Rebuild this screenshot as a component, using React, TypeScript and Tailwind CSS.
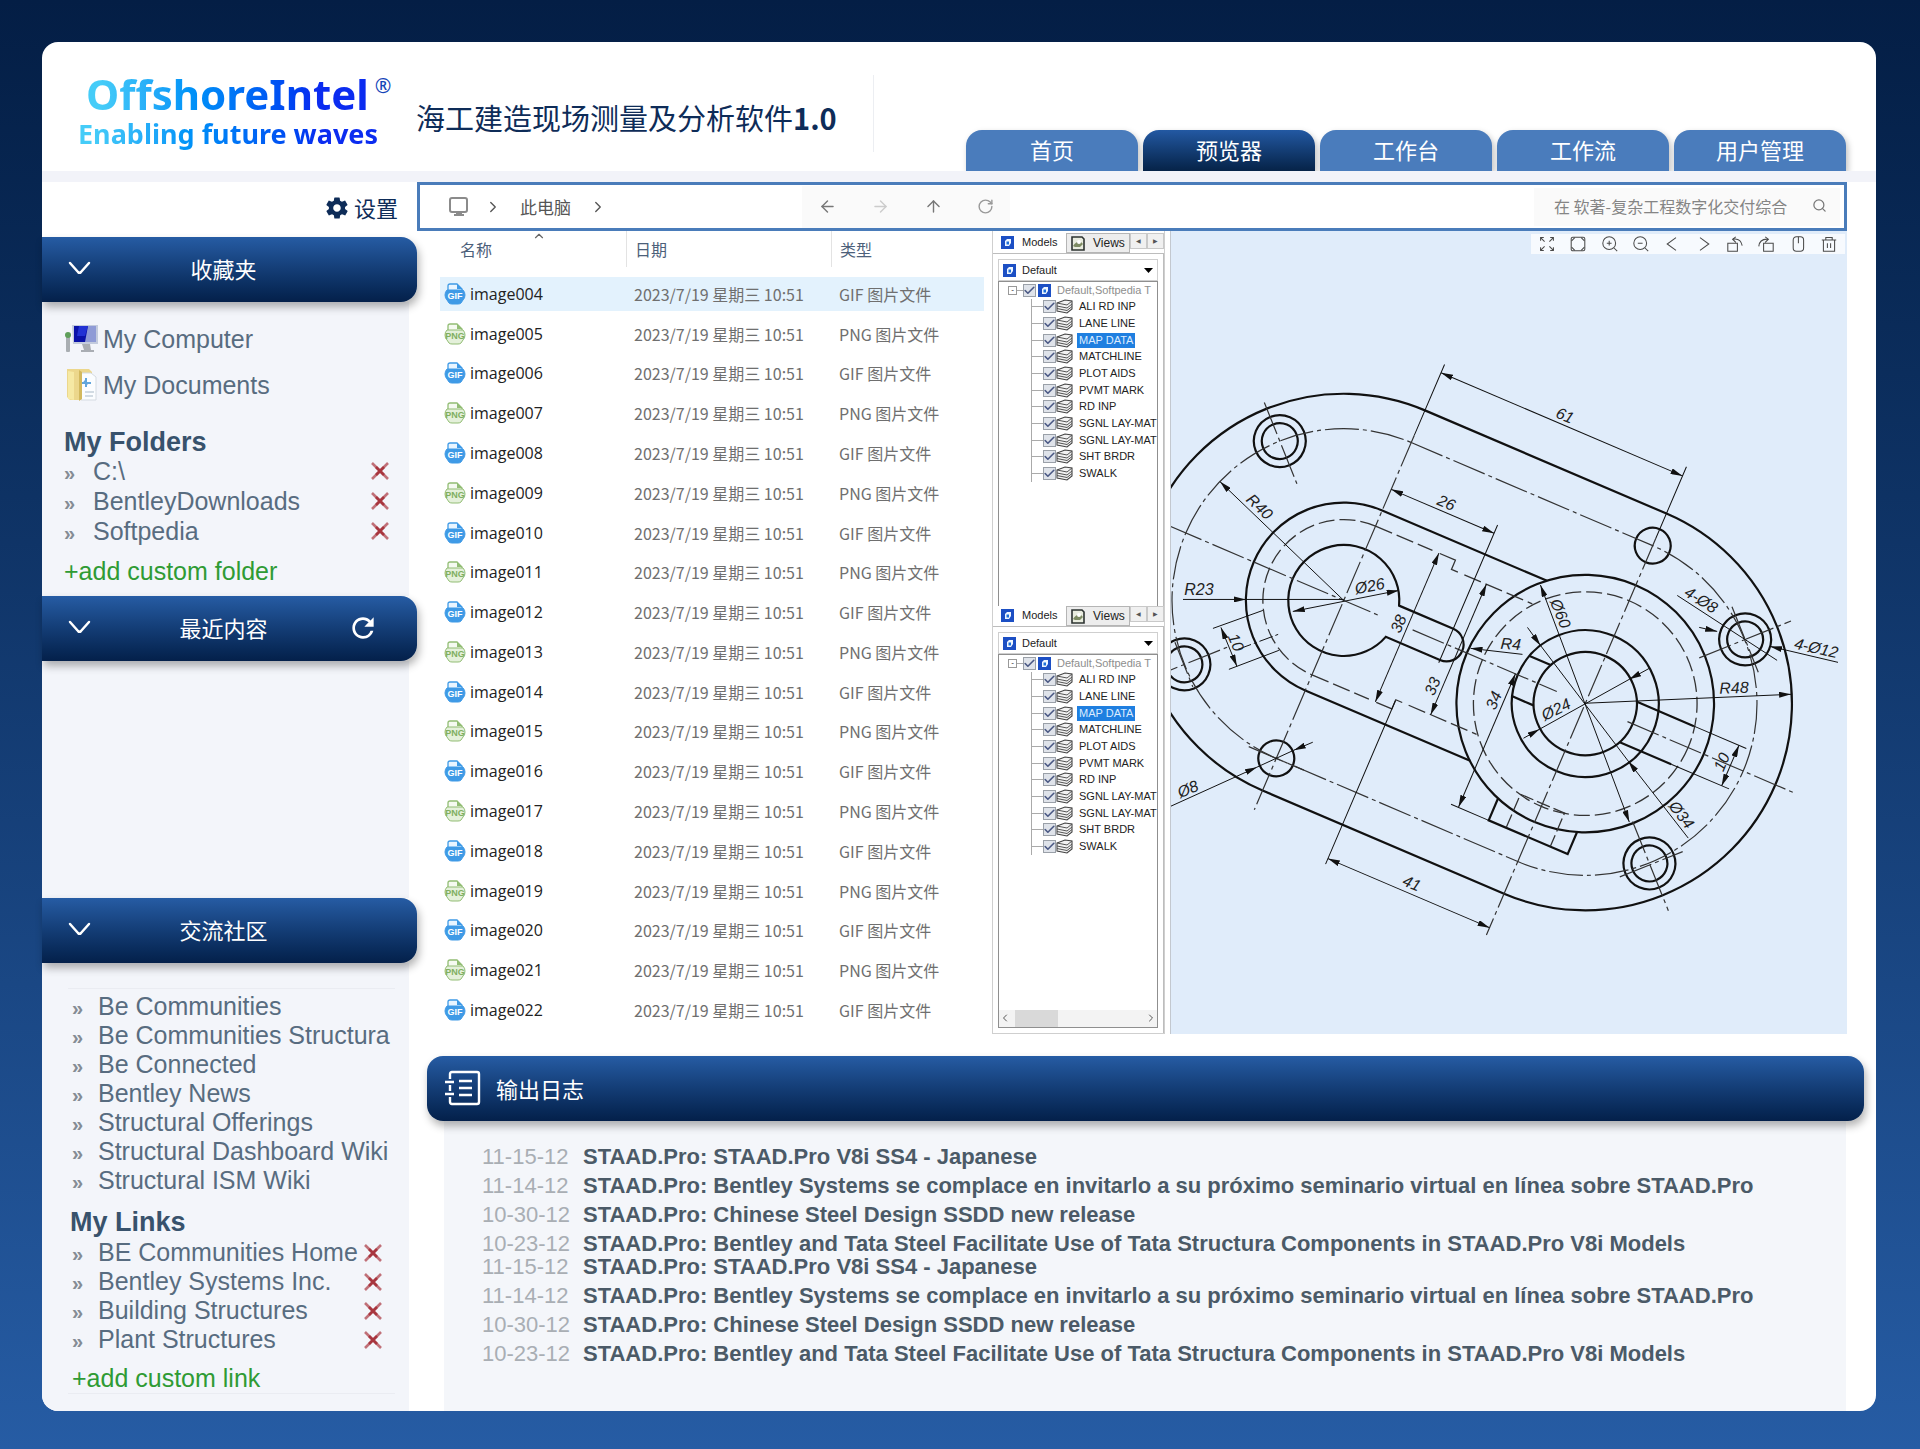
import React, { useState } from 'react';
import {
  ArrowLeft,
  ArrowRight,
  ArrowUp,
  Check,
  ChevronLeft,
  ChevronRight,
  ChevronUp,
  RotateCw,
  Search,
} from 'lucide-react';
import { MdRefresh } from 'react-icons/md';
import { IoMdSettings } from 'react-icons/io';

const tabs = ['首页', '预览器', '工作台', '工作流', '用户管理'];

const folders = ['C:\\', 'BentleyDownloads', 'Softpedia'];

const communities = [
  'Be Communities',
  'Be Communities Structura',
  'Be Connected',
  'Bentley News',
  'Structural Offerings',
  'Structural Dashboard Wiki',
  'Structural ISM Wiki',
];

const links = ['BE Communities Home', 'Bentley Systems Inc.', 'Building Structures', 'Plant Structures'];

const files = Array.from({ length: 19 }, (_, i) => ({
  name: `image${String(i + 4).padStart(3, '0')}`,
  date: '2023/7/19 星期三 10:51',
  kind: i % 2 === 0 ? 'GIF' : 'PNG',
}));

const layers = [
  'ALI RD INP',
  'LANE LINE',
  'MAP DATA',
  'MATCHLINE',
  'PLOT AIDS',
  'PVMT MARK',
  'RD INP',
  'SGNL LAY-MAT',
  'SGNL LAY-MAT',
  'SHT BRDR',
  'SWALK',
];

const news = [
  { date: '11-15-12', text: 'STAAD.Pro: STAAD.Pro V8i SS4 - Japanese' },
  {
    date: '11-14-12',
    text: 'STAAD.Pro: Bentley Systems se complace en invitarlo a su próximo seminario virtual en línea sobre STAAD.Pro',
  },
  { date: '10-30-12', text: 'STAAD.Pro: Chinese Steel Design SSDD new release' },
  {
    date: '10-23-12',
    text: 'STAAD.Pro: Bentley and Tata Steel Facilitate Use of Tata Structura Components in STAAD.Pro V8i Models',
  },
];

/* ---------- icons ---------- */

function ComputerIcon() {
  return (
    <svg width="36" height="30" viewBox="0 0 36 30" aria-hidden="true">
      <rect x="2" y="12" width="4" height="16" rx="1" fill="#a9aeb2" />
      <circle cx="4" cy="11" r="3" fill="#5f9f5a" />
      <path d="M8 1h26v19H9z" fill="#c3cbdd" />
      <path d="M10 2h22v16H10z" fill="#8f9bd6" />
      <path d="M10 2h14l-3 16H10z" fill="#0a12a8" />
      <path d="M24 2l-3 10h-8l2-10z" fill="#2232d4" />
      <path d="M18 20h8l1 6h3v2H17v-2h3z" fill="#a9adb3" />
    </svg>
  );
}

function DocumentsIcon() {
  return (
    <svg width="36" height="36" viewBox="0 0 36 36" aria-hidden="true">
      <path d="M3 2h22l3 3v4H16v24H6l-3-3z" fill="#ecd78c" />
      <path d="M17 6h10l5 4v23H17z" fill="#fbfdff" stroke="#d5dbe1" strokeWidth="1" />
      <path d="M15 3v31l3-2V5z" fill="#d3b95e" />
      <path d="M4 4l6 1v28l-6-1z" fill="#f6e9a4" />
      <path d="M18 16h9M22 11v9M20 14l4 3" stroke="#63a6dc" strokeWidth="2" fill="none" />
      <path d="M21 25h9M21 29h8" stroke="#c5cfda" strokeWidth="1.500" />
    </svg>
  );
}

function CrossIcon() {
  return (
    <svg width="20" height="20" viewBox="0 0 20 20" fill="none" aria-hidden="true">
      <path d="M2 2l16 16M18 2L2 18" stroke="#c07078" strokeWidth="2.600" />
      <path d="M6 6l8 8M14 6l-8 8" stroke="#a8363f" strokeWidth="2.600" />
    </svg>
  );
}

function FileIcon({ kind }: { kind: string }) {
  const gif = kind === 'GIF';
  const color = gif ? '#3f9ae6' : '#92bd74';
  return (
    <svg width="22" height="22" viewBox="0 0 22 22" aria-hidden="true">
      <path d="M4 9V3q0-2 2-2h7l5 5v3" fill={gif ? '#e9f5ff' : '#f5faf1'} stroke={color} strokeWidth="1.3" />
      <path d="M13 1l5 5h-5z" fill={color} />
      <path
        d="M3 7h16q2 2 2 5t-2 5l-2 3q-1 1-3 1H8q-2 0-3-1l-2-3q-2-2-2-5t2-5z"
        fill={gif ? color : '#e4f0da'}
        stroke={color}
        strokeWidth="1"
      />
      <text
        x="11"
        y="16"
        textAnchor="middle"
        fontSize="9"
        fontWeight="700"
        fill={gif ? '#fff' : '#7fae5f'}
        className="font-['Liberation_Sans',sans-serif]"
      >
        {kind}
      </text>
    </svg>
  );
}

function ModelIcon() {
  return (
    <svg width="13" height="13" viewBox="0 0 13 13" className="shrink-0" aria-hidden="true">
      <rect width="13" height="13" fill="#1c4fc4" />
      <path d="M4 5l2-2h4v4l-2 3H4z" fill="#eef6ff" />
      <path d="M5.500 5.500h2.500v3h-2.500z" fill="#1d6fd8" />
    </svg>
  );
}

function ViewsIcon() {
  return (
    <svg width="14" height="15" viewBox="0 0 14 15" className="shrink-0" aria-hidden="true">
      <path d="M1 1h10l2 2v11H1z" fill="#e9ecdf" stroke="#2d3331" strokeWidth="1.600" />
      <path d="M2 10q4-6 8-4l2 2-3 3H4z" fill="#7d8b63" />
      <circle cx="8" cy="6" r="2" fill="#fff" />
    </svg>
  );
}

function LayerIcon() {
  return (
    <svg width="17" height="15" viewBox="0 0 17 15" className="shrink-0" aria-hidden="true">
      <path d="M1 4l8-3 7 1v8l-5 4-10-2z" fill="#f2f2f2" stroke="#444" strokeWidth="1.100" />
      <path d="M1 4l10 2 5-4M1 7l10 2 5-4M1 9.500l10 2 5-4" fill="none" stroke="#555" strokeWidth="1" />
    </svg>
  );
}

function NotebookIcon() {
  return (
    <svg width="36" height="36" viewBox="0 0 36 36" fill="none" stroke="#fff" strokeWidth="2.400" aria-hidden="true">
      <path d="M5 9V4q0-2 2-2h25q2 0 2 2v28q0 2-2 2H7q-2 0-2-2v-5M5 15v6" />
      <path d="M0 12h9M0 24h9M14 11h13M14 18h13M14 25h13" />
    </svg>
  );
}

const toolIcons: { name: string; icon: React.ReactNode }[] = [
  {
    name: '全屏',
    icon: <path d="M2 6V2h4M2 2l5 5M14 2h4v4M18 2l-5 5M2 14v4h4M2 18l5-5M18 14v4h-4M18 18l-5-5" />,
  },
  {
    name: '适应窗口',
    icon: (
      <>
        <rect x="1.500" y="1.500" width="17" height="17" rx="2" />
        <path d="M2 6l4-4M14 2l4 4M2 14l4 4M18 14l-4 4" />
      </>
    ),
  },
  { name: '放大', icon: <><circle cx="9" cy="9" r="8" /><path d="M15 15l4 4M9 6v6M6 9h6" /></> },
  { name: '缩小', icon: <><circle cx="9" cy="9" r="8" /><path d="M15 15l4 4M6 9h6" /></> },
  { name: '上一张', icon: <path d="M15 2L4 10l11 8" /> },
  { name: '下一张', icon: <path d="M5 2l11 8-11 8" /> },
  { name: '向左旋转', icon: <path d="M1 9h12v10H1zM7 4q10-2 12 8M11 1L7 4l4 4" /> },
  { name: '向右旋转', icon: <path d="M7 9h12v10H7zM13 4Q2 3 1 13M9 1l4 3-4 4" /> },
  {
    name: '鼠标',
    icon: <><rect x="4" y="1" width="13" height="18" rx="4" /><path d="M10.500 1v8" /></>,
  },
  { name: '删除', icon: <path d="M1 5h18M6 5V2h8v3M3 5v14h14V5M8 9v6M12 9v6" /> },
];

/* ---------- sidebar ---------- */

function SectionBar({ title, action }: { title: string; action?: React.ReactNode }) {
  return (
    <div className="relative z-10 flex h-[65px] items-center rounded-r-2xl bg-linear-to-b from-[#265ca4] to-[#04204a] px-6 pb-0.5 text-white shadow-[2px_5px_8px_rgba(0,0,0,0.3)]">
      <button type="button" aria-label={`折叠${title}`} className="w-7">
        <svg width="28" height="20" viewBox="0 0 28 20" fill="none" stroke="#fff" strokeWidth="2.500" strokeLinecap="round" aria-hidden="true">
          <path d="M4 4l8 9q1.500 1.500 3 0l8-9" />
        </svg>
      </button>
      <h2 className="flex-1 pl-6 text-center text-[22px]">{title}</h2>
      <div className="w-16 pl-[18px]">{action}</div>
    </div>
  );
}

function LinkRow({ label, removable, small }: { label: string; removable?: boolean; small?: boolean }) {
  return (
    <li className={`flex items-center ${small ? 'h-[29px]' : 'h-[30px]'}`}>
      <span className={`${small ? 'w-[30px] pl-1' : 'w-[29px]'} pt-1 text-[20px] font-bold text-[#858c94]`} aria-hidden="true">
        »
      </span>
      <a href="#" className="flex-1 whitespace-nowrap">{label}</a>
      {removable && (
        <button type="button" aria-label={`Remove ${label}`}>
          <CrossIcon />
        </button>
      )}
    </li>
  );
}

function Sidebar() {
  return (
    <aside className="flex w-[375px] shrink-0 flex-col">
      <div className="flex h-[55px] items-center justify-end pr-[19px] pb-1 text-[22px] text-[#0e2c58]">
        <button type="button" className="flex items-center gap-1">
          <IoMdSettings className="h-[26px] w-[26px]" />
          设置
        </button>
      </div>

      <SectionBar title="收藏夹" />
      <div className="mr-2 bg-[#f3f5fa] pt-[14px] pr-[19px] pb-[10px] pl-[22px] font-['Liberation_Sans',Arial,sans-serif] text-[25px] leading-[30px] text-[#586c80]">
        <a href="#" className="flex h-[46px] items-center gap-[3px]">
          <ComputerIcon />
          My Computer
        </a>
        <a href="#" className="flex h-[46px] items-center gap-[3px]">
          <DocumentsIcon />
          My Documents
        </a>
        <h3 className="mt-5 text-[27px] leading-[28px] font-bold text-[#38526c]">My Folders</h3>
        <ul>
          {folders.map((name) => (
            <LinkRow key={name} label={name} removable />
          ))}
        </ul>
        <a href="#" className="mt-[10px] block text-[#2f9b34]">+add custom folder</a>
      </div>

      <SectionBar
        title="最近内容"
        action={
          <button type="button" aria-label="刷新" className="block">
            <MdRefresh className="h-8 w-8" />
          </button>
        }
      />
      <div className="mr-2 h-[237px] bg-[#f3f5fa]" />

      <SectionBar title="交流社区" />
      <div className="mr-2 flex-1 rounded-bl-2xl bg-[#f3f5fa] pt-[25px] pr-[14px] pb-4 pl-[26px] font-['Liberation_Sans',Arial,sans-serif] text-[25px] leading-[29px] text-[#586c80]">
        <div className="border-y border-[#eaecf2] pt-[3px]">
          <ul>
            {communities.map((name) => (
              <LinkRow key={name} label={name} small />
            ))}
          </ul>
          <h3 className="mt-3 pl-0.5 text-[27px] leading-[31px] font-bold text-[#38526c]">My Links</h3>
          <ul className="pr-3">
            {links.map((name) => (
              <LinkRow key={name} label={name} removable small />
            ))}
          </ul>
          <a href="#" className="mt-[10px] block pl-1 text-[#2f9b34]">+add custom link</a>
        </div>
      </div>
    </aside>
  );
}

/* ---------- file browser ---------- */

function AddressBar() {
  return (
    <div className="mr-[29px] flex h-[49px] items-center justify-between border-[3px] border-[#4a7cba] bg-white pl-7 text-[17px] text-[#555]">
      <nav className="flex w-[354px] items-center">
        <svg width="22" height="22" viewBox="0 0 22 22" fill="none" stroke="#8b8b8b" strokeWidth="2" aria-hidden="true">
          <rect x="2" y="2" width="17" height="14" rx="2" />
          <path d="M6 19h10M8 17h6" />
        </svg>
        <ChevronRight className="ml-3.5 h-[18px] w-[18px]" strokeWidth={1.800} />
        <button type="button" className="mx-[18px]">此电脑</button>
        <ChevronRight className="h-[18px] w-[18px]" strokeWidth={1.800} />
      </nav>
      <div className="mr-auto flex h-[42px] items-center gap-[34px] bg-[#fafafa] px-4">
        <button type="button" aria-label="后退"><ArrowLeft className="h-[19px] w-[19px] text-[#777]" strokeWidth={1.800} /></button>
        <button type="button" aria-label="前进"><ArrowRight className="h-[19px] w-[19px] text-[#ccc]" strokeWidth={1.800} /></button>
        <button type="button" aria-label="向上"><ArrowUp className="h-[19px] w-[19px] text-[#777]" strokeWidth={1.800} /></button>
        <button type="button" aria-label="刷新"><RotateCw className="h-[17px] w-[17px] text-[#999]" strokeWidth={2} /></button>
      </div>
      <label className="mr-1 flex h-[38px] items-center gap-1 bg-[#fafafa] pr-[13px] pb-0.5 pl-5">
        <input
          type="search"
          aria-label="搜索"
          placeholder="在 软著-复杂工程数字化交付综合"
          className="w-[254px] bg-transparent text-[16px] outline-none placeholder:text-[#858585]"
        />
        <Search className="h-[15px] w-[15px] text-[#777]" strokeWidth={2} />
      </label>
    </div>
  );
}

function FileTable() {
  const [selected, setSelected] = useState('image004');

  return (
    <table className="h-[799px] w-[544px] shrink-0 table-fixed border-collapse text-left text-[16px] text-[#6f6f6f]">
      <colgroup>
        <col className="w-[186px]" />
        <col className="w-[205px]" />
        <col />
      </colgroup>
      <thead>
        <tr className="h-[43px] align-top text-[#4c607a]">
          {['名称', '日期', '类型'].map((label, i) => (
            <th key={label} className="p-0 font-normal">
              <div className={`relative flex h-9 items-center ${i === 0 ? 'pl-5' : 'border-l border-[#e3e3e3] pl-2'}`}>
                {label}
                {i === 0 && <ChevronUp className="absolute -top-0.5 left-[92px] h-3.5 w-3.5 text-[#666]" strokeWidth={2} />}
              </div>
            </th>
          ))}
        </tr>
      </thead>
      <tbody>
        {files.map((file) => {
          const bg = file.name === selected ? 'bg-[#e3f2fd]' : '';
          return (
            <tr key={file.name} onClick={() => setSelected(file.name)} className="whitespace-nowrap">
              <td className="p-0">
                <div className={`flex h-[34px] items-center gap-1 pl-1 font-['Open_Sans',sans-serif] text-[#222] ${bg}`}>
                  <FileIcon kind={file.kind} />
                  {file.name}
                </div>
              </td>
              <td className="p-0">
                <div className={`flex h-[34px] items-center pl-2 ${bg}`}>{file.date}</div>
              </td>
              <td className="p-0">
                <div className={`flex h-[34px] items-center pl-2 ${bg}`}>{file.kind} 图片文件</div>
              </td>
            </tr>
          );
        })}
      </tbody>
    </table>
  );
}

/* ---------- model tree ---------- */

function TreeCheckbox({ id }: { id: string }) {
  return (
    <span className="relative h-[13px] w-[13px] shrink-0">
      <input
        id={id}
        type="checkbox"
        defaultChecked
        className="peer block h-[13px] w-[13px] appearance-none border border-[#9aa0a8] bg-[#dfe3ea]"
      />
      <Check className="pointer-events-none absolute top-0 left-0 hidden h-[13px] w-[13px] text-[#4a5884] peer-checked:block" strokeWidth={3} />
    </span>
  );
}

function ModelPanel({ id, scroll, className }: { id: string; scroll?: boolean; className: string }) {
  return (
    <section className={`flex flex-col font-['Liberation_Sans',Arial,sans-serif] text-[11px] text-[#222] ${className}`}>
      <div className="flex h-5 items-stretch">
        <button type="button" className="flex w-[73px] items-center gap-2 pb-0.5 pl-2 whitespace-nowrap">
          <ModelIcon />
          Models
        </button>
        <button type="button" className="flex flex-1 items-center gap-2 border border-[#b5b5b5] bg-[#ededed] pl-1 text-[12px]">
          <ViewsIcon />
          Views
        </button>
        <button type="button" aria-label="向左" className="mb-1 flex w-[17px] items-center justify-center border border-[#c9c9c9] bg-[#f0f0f0] text-[6px] text-[#555]">◀</button>
        <button type="button" aria-label="向右" className="mb-1 flex w-[17px] items-center justify-center border border-[#c9c9c9] bg-[#f0f0f0] text-[6px] text-[#555]">▶</button>
      </div>

      <div className={`flex flex-1 flex-col border-t border-r border-[#bdbdbd] px-[5px] pt-[5px] ${scroll ? 'pb-[5px]' : ''}`}>
        <label className="relative flex h-[22px] items-center border border-[#cfcfcf] pl-1">
          <ModelIcon />
          <select aria-label="模型" className="w-full appearance-none bg-transparent pl-1.5 outline-none">
            <option>Default</option>
          </select>
          <svg width="9" height="5" viewBox="0 0 9 5" className="pointer-events-none absolute right-1" aria-hidden="true">
            <path d="M0 0h9L4.500 5z" />
          </svg>
        </label>

        <div className={`flex flex-1 flex-col overflow-hidden border border-[#8f8f8f] ${scroll ? '' : 'border-b-0'}`}>
          <ul className="grid h-[200px] auto-rows-fr whitespace-nowrap">
            <li className="flex items-center pl-[9px]">
              <span className="flex h-[9px] w-[9px] shrink-0 items-center justify-center border border-[#999] text-[8px] leading-none">-</span>
              <span className="w-1.5 shrink-0 border-t border-[#aaa]" />
              <TreeCheckbox id={`${id}-root`} />
              <span className="pl-0.5"><ModelIcon /></span>
              <label htmlFor={`${id}-root`} className="pl-1.5 text-[#8e8e8e]">Default,Softpedia T</label>
            </li>
            {layers.map((layer, i) => (
              <li key={i} className="ml-8 flex items-center border-l border-[#aaa]">
                <span className="w-[11px] shrink-0 border-t border-[#aaa]" />
                <TreeCheckbox id={`${id}-${i}`} />
                <LayerIcon />
                <label
                  htmlFor={`${id}-${i}`}
                  className={`ml-1 px-0.5 leading-[15px] ${layer === 'MAP DATA' ? 'bg-[#1f7fe0] text-[#dcecff]' : ''}`}
                >
                  {layer}
                </label>
              </li>
            ))}
          </ul>
          {scroll && (
            <div className="mt-auto flex h-[17px] items-center bg-[#f3f3f3]">
              <ChevronLeft className="h-3 w-3 text-[#555]" />
              <div className="ml-1 h-full w-[43px] bg-[#d9d9d9]" />
              <ChevronRight className="ml-auto h-3 w-3 text-[#555]" />
            </div>
          )}
        </div>
      </div>
    </section>
  );
}

/* ---------- drawing viewer ---------- */

// Flange plate. Origin is the centre of the left boss, 1mm = 4.3 units,
// and the part frame is turned 23.13 degrees.
function FlangeDrawing() {
  const both = { markerStart: 'url(#arrow)', markerEnd: 'url(#arrow)' };
  const end = { markerEnd: 'url(#arrow)' };
  const cx = 263;

  return (
    <svg viewBox="0 0 677 804" className="block w-full" fill="none" stroke="#111" role="img" aria-label="Flange drawing">
      <defs>
        <marker id="arrow" viewBox="0 0 12 6" refX="12" refY="3" markerWidth="12" markerHeight="6" markerUnits="userSpaceOnUse" orient="auto-start-reverse">
          <path d="M0 0l12 3-12 3z" fill="#111" stroke="none" />
        </marker>
      </defs>
      <g transform="translate(173 370)">
        <g transform="rotate(23.130)">
          {/* outlines */}
          <g strokeWidth="2.200">
            <path d={`M0-207H${cx}A207 207 0 0 1 ${cx} 207H0A207 207 0 0 1 0-207z`} />
            <path d="M179.500-98H0A98 98 0 0 0 0 98H179.500" />
            <path d="M53-17H112A17 17 0 0 1 112 17H53A55.600 55.600 0 1 1 53-17z" />
            <circle cx={cx} cy="0" r="129" />
            <circle cx={cx} cy="0" r="73.500" />
            <circle cx={cx} cy="0" r="51.700" />
            <path d={`M${cx - 70}-22h23M${cx - 70} 22h23M${cx + 47}-22h62M${cx + 47} 22h56`} />
            <path d={`M${cx - 43} 121.500V145.500H${cx + 43}V121.500`} />
            <circle cx="-121.600" cy="-121.600" r="26" />
            <circle cx="-121.600" cy="-121.600" r="18" />
            <circle cx="-121.600" cy="121.600" r="26" />
            <circle cx="-121.600" cy="121.600" r="18" />
            <circle cx={cx + 122} cy="-122" r="26" />
            <circle cx={cx + 122} cy="-122" r="18" />
            <circle cx={cx + 122} cy="122" r="26" />
            <circle cx={cx + 122} cy="122" r="18" />
            <circle cx="0" cy="172" r="18" />
            <circle cx={cx} cy="-172" r="18" />
          </g>

          {/* hidden edges */}
          <g stroke="#333" strokeWidth="1.300">
            <path d="M70-81H87V-71H94M70 81H87V71H94" />
            <path d="M0-81H62M0 81H62M101-71H175M101 71H175" strokeDasharray="18 5" />
            <path d="M0-81A81 81 0 0 0 0 81" strokeDasharray="16 5" />
            <circle cx={cx} cy="0" r="112" strokeDasharray="16 5" />
            <path d={`M${cx - 24} 145V109H${cx + 24}V145`} strokeDasharray="14 4" />
          </g>

          {/* centre lines */}
          <g stroke="#333" strokeWidth="1.200" strokeDasharray="34 4 4 4">
            <path d={`M0-172H${cx}A172 172 0 0 1 ${cx} 172H0A172 172 0 0 1 0-172z`} />
            <path d={`M-189 0H37M75 0H232M${cx + 46} 0H${cx + 227}`} />
            <path d={`M0-180V228M${cx}-180V252`} />
            <path d="M-151-151l62 62M-151 151l62-62M-139 105l34 34" />
            <path d={`M${cx + 87}-87l70-70M${cx + 97}-147l50 50M${cx + 90} 90l68 68M${cx + 100} 146l48-48`} />
            <path d="M-30 172H30" />
          </g>

          {/* dimensions */}
          <g strokeWidth="1">
            <path d={`M0-257V-180M${cx}-258V-180M112-130V20M87 72V250M${cx - 84} 145.500H${cx - 43}`} />
            <path d={`M${cx + 109}-22H${cx + 166}M${cx + 103} 22H${cx + 166}`} />
            <path d={`M0-248H${cx}`} {...both} />
            <path d="M0-121H112" {...both} />
            <path d="M69-81V81" {...both} />
            <path d="M125-71V71" {...both} />
            <path d={`M${cx - 76} 0V145`} {...both} />
            <path d={`M${cx + 158}-22V22`} {...both} />
            <path d={`M87 244H${cx}`} {...both} />
          </g>
          <g className="font-['Liberation_Sans',sans-serif] text-[16px] italic" fill="#222" stroke="none" textAnchor="middle">
            <text x="131" y="-252">61</text>
            <text x="56" y="-125">26</text>
            <text x="174" y="239">41</text>
            <text transform="translate(65 0) rotate(-90)">38</text>
            <text transform="translate(121 44) rotate(-90)">33</text>
            <text transform={`translate(${cx - 80} 33) rotate(-90)`}>34</text>
            <text transform={`translate(${cx + 154} 0) rotate(-90)`}>10</text>
          </g>
        </g>

        {/* leaders */}
        <g strokeWidth="1">
          <path d="M-161-1H-98" {...end} />
          <path d="M-98-1H0" />
          <path d="M0 0L-124-119" {...end} />
          <path d="M-51 11L55-10" {...both} />
          <path d="M-173 206L-87 167" {...end} />
          <path d="M-31 142L-50 150" {...end} />
          <path d="M-87 167L-50 150" />
          <path d="M179 54L127 48" {...end} />
          <path d="M197-15.500L286 222" {...both} />
          <path d="M184 27L197 45" {...end} />
          <path d="M345 238L285 161" {...end} />
          <path d="M197 45L285 161" />
          <path d="M180 138L196 129" {...end} />
          <path d="M306 68L286 79" {...end} />
          <path d="M196 129L286 79" />
          <path d="M241 103L448 94" {...end} />
          <path d="M334-5L434 60" />
          <path d="M356 27L374 31" {...end} />
          <path d="M495 62L427 46" {...end} />
          <path d="M-131 28L-81 10M-115 69L-65 50" />
          <path d="M-106 49L-63 33" strokeDasharray="14 3 3 3" />
          <path d="M-123 27L-107 66" {...both} />
        </g>
        <g className="font-['Liberation_Sans',sans-serif] text-[16px] italic" fill="#222" stroke="none" textAnchor="middle">
          <text x="-145" y="-5">R23</text>
          <text transform="translate(-88 -90) rotate(44)">R40</text>
          <text transform="translate(27 -9) rotate(-11)">Ø26</text>
          <text transform="translate(-154 194) rotate(-23)">Ø8</text>
          <text transform="translate(167 49) rotate(4)">R4</text>
          <text transform="translate(212 15) rotate(68)">Ø60</text>
          <text transform="translate(334 218) rotate(52)">Ø34</text>
          <text transform="translate(215 114) rotate(-26)">Ø24</text>
          <text transform="translate(391 93) rotate(-2)">R48</text>
          <text transform="translate(355 4) rotate(32)">4-Ø8</text>
          <text transform="translate(472 53) rotate(13)">4-Ø12</text>
          <text transform="translate(-113 44) rotate(67)">10</text>
        </g>
      </g>
    </svg>
  );
}

function Viewer() {
  return (
    <div className="relative min-w-0 flex-1 overflow-hidden border-l border-[#c3c8cf] bg-[#e0ecfa]">
      <FlangeDrawing />
      <div className="absolute top-[3px] right-0.5 flex h-5 w-[314px] items-center justify-between bg-[#f7fafe] px-2">
        {toolIcons.map((tool) => (
          <button key={tool.name} type="button" aria-label={tool.name} title={tool.name}>
            <svg width="16" height="16" viewBox="0 0 20 20" fill="none" stroke="#4a4a4a" strokeWidth="1.300">
              {tool.icon}
            </svg>
          </button>
        ))}
      </div>
    </div>
  );
}

/* ---------- output log ---------- */

function OutputLog() {
  return (
    <section className="mt-[22px] flex flex-1 flex-col">
      <header className="relative z-10 mr-3 ml-[10px] flex h-[65px] items-center gap-[15px] rounded-2xl bg-linear-to-b from-[#265ca4] to-[#04204a] pl-[18px] text-white shadow-[2px_5px_8px_rgba(0,0,0,0.3)]">
        <NotebookIcon />
        <h2 className="text-[22px]">输出日志</h2>
      </header>
      <div className="mr-[30px] ml-[27px] flex-1 bg-[#f4f6fa] pt-[21px] pl-[38px] font-['Liberation_Sans',Arial,sans-serif] text-[22px] leading-[29px] whitespace-nowrap">
        {[0, 1].map((block) => (
          <ul key={block} className="h-[110px]">
            {news.map((item) => (
              <li key={item.date} className="flex">
                <time className="w-[101px] text-[#a9aeb4]">{item.date}</time>
                <a href="#" className="font-bold text-[#4b5a67]">{item.text}</a>
              </li>
            ))}
          </ul>
        ))}
      </div>
    </section>
  );
}

export default function App() {
  const [activeTab, setActiveTab] = useState('预览器');

  return (
    <div className="flex min-h-screen flex-col bg-linear-to-b from-[#041e45] to-[#265ca4] pt-[42px] pr-[44px] pb-[38px] pl-[42px] font-['Noto_Sans_CJK_SC',sans-serif]">
      <div className="flex flex-1 flex-col rounded-2xl bg-white">
        <header className="flex h-[129px] pr-[30px] pl-9">
          <div className="w-[338px] shrink-0 pt-[30px] font-['Noto_Sans',sans-serif] font-bold whitespace-nowrap">
            <div className="flex pl-2">
              <span className="bg-linear-to-r from-[#45ccf8] from-5% to-[#0b2cf0] to-80% bg-clip-text text-[42px] leading-[44px] text-transparent">
                OffshoreIntel
              </span>
              <span className="ml-1.5 text-[20px] leading-[28px] font-normal text-[#1546b8]">®</span>
            </div>
            <div className="w-fit bg-linear-to-r from-[#45ccf8] from-5% to-[#0b2cf0] to-80% bg-clip-text text-[27px] leading-[36px] text-transparent">
              Enabling future waves
            </div>
          </div>
          <h1 className="pt-[53px] text-[29px] leading-[44px] whitespace-nowrap text-[#0e2c58]">
            海工建造现场测量及分析软件<span className="font-bold">1.0</span>
          </h1>
          <div className="mt-[33px] ml-9 h-[77px] border-l border-[#eceef2]" />
          <nav className="ml-auto flex gap-[5px] self-end">
            {tabs.map((tab) => (
              <button
                key={tab}
                type="button"
                onClick={() => setActiveTab(tab)}
                className={`h-[41px] w-[172px] rounded-t-2xl pb-0.5 text-[22px] text-white shadow-[2px_3px_6px_rgba(0,0,0,0.25)] ${
                  tab === activeTab ? 'bg-linear-to-b from-[#2359a3] to-[#062348]' : 'bg-[#4a7cbc]'
                }`}
              >
                {tab}
              </button>
            ))}
          </nav>
        </header>
        <div className="h-[11px] bg-[#f2f3f9]" />

        <div className="flex flex-1">
          <Sidebar />
          <main className="flex min-w-0 flex-1 flex-col">
            <AddressBar />
            <div className="mr-[29px] flex pl-[23px]">
              <FileTable />
              <div className="mr-[5px] ml-2 flex w-[173px] shrink-0 flex-col border border-t-0 border-[#cfcfcf] pt-0.5">
                <ModelPanel id="top" className="h-[373px]" />
                <ModelPanel id="bottom" className="flex-1" scroll />
              </div>
              <Viewer />
            </div>
            <OutputLog />
          </main>
        </div>
      </div>
    </div>
  );
}
